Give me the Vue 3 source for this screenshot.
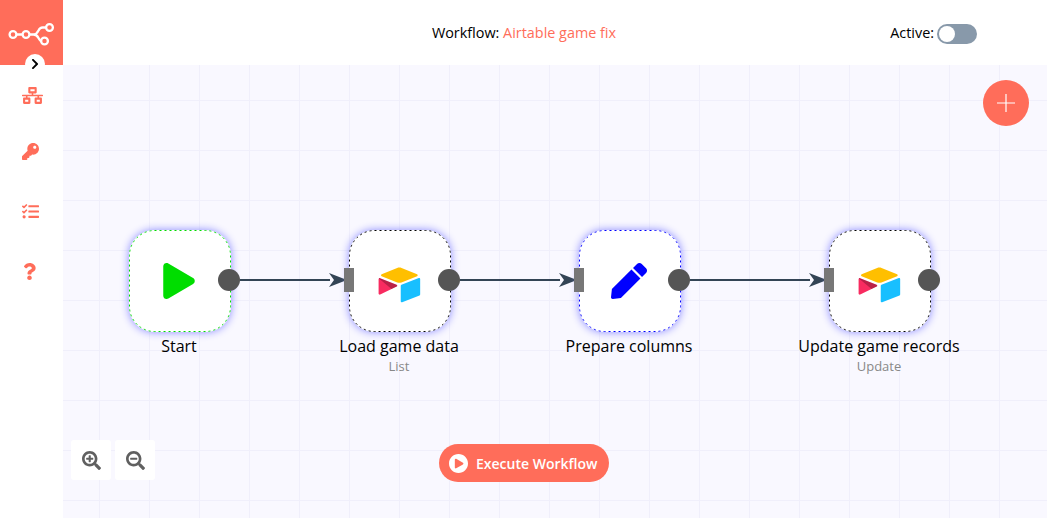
<template>
  <div class="app">
    <header class="topbar">
      <div class="logo-cell">
        <svg class="logo" width="63" height="65" viewBox="0 0 63 65" fill="none" stroke="#fff" stroke-width="2.300">
          <circle cx="13" cy="34.500" r="3.400" />
          <circle cx="26" cy="34.500" r="3.400" />
          <circle cx="49.500" cy="27.500" r="3.400" />
          <circle cx="44.500" cy="41" r="3.400" />
          <path d="M16.500 34.500h6M29.500 34.500h4c3 0 4-2 5-4s2-3 4-3h3.500M33.500 34.500c3 0 4 1.500 5 3.500s1.500 3 3 3" />
        </svg>
      </div>
      <div class="title">Workflow: <span class="title-name">Airtable game fix</span></div>
      <div class="active-cell">
        <span>Active:</span>
        <span class="switch"><span class="knob"></span></span>
      </div>
    </header>

    <div class="body">
      <aside class="sidebar">
        <button class="collapse">
          <svg width="8" height="12" viewBox="0 0 320 512"><path fill="#000" d="M285.476 272.971L91.132 467.314c-9.373 9.373-24.569 9.373-33.941 0l-22.667-22.667c-9.357-9.357-9.375-24.522-.04-33.901L188.505 256 34.484 101.255c-9.335-9.379-9.317-24.544.04-33.901l22.667-22.667c9.373-9.373 24.569-9.373 33.941 0L285.475 239.030c9.373 9.372 9.373 24.568.001 33.941z" /></svg>
        </button>
        <div class="menu-item">
          <svg width="21" height="17" viewBox="0 0 640 512"><path d="M640 264v-16c0-8.840-7.160-16-16-16H344v-40h72c17.670 0 32-14.330 32-32V32c0-17.670-14.330-32-32-32H224c-17.670 0-32 14.330-32 32v128c0 17.670 14.330 32 32 32h72v40H16c-8.840 0-16 7.160-16 16v16c0 8.840 7.160 16 16 16h104v40H64c-17.670 0-32 14.330-32 32v128c0 17.670 14.330 32 32 32h160c17.670 0 32-14.330 32-32V352c0-17.670-14.330-32-32-32h-56v-40h304v40h-56c-17.670 0-32 14.330-32 32v128c0 17.670 14.330 32 32 32h160c17.670 0 32-14.330 32-32V352c0-17.670-14.330-32-32-32h-56v-40h104c8.840 0 16-7.160 16-16zM256 128V64h128v64H256zm-64 320H96v-64h96v64zm352 0h-96v-64h96v64z" /></svg>
        </div>
        <div class="menu-item">
          <svg width="17" height="17" viewBox="0 0 512 512"><path d="M512 176.001C512 273.203 433.202 352 336 352c-11.220 0-22.190-1.062-32.827-3.069l-24.012 27.014A23.999 23.999 0 0 1 261.223 384H224v40c0 13.255-10.745 24-24 24h-40v40c0 13.255-10.745 24-24 24H24c-13.255 0-24-10.745-24-24v-78.059c0-6.365 2.529-12.470 7.029-16.971l161.802-161.802C163.108 213.814 160 195.271 160 176 160 78.798 238.797.001 335.999 0 433.488-.001 512 78.511 512 176.001zM336 128c0 26.510 21.490 48 48 48s48-21.490 48-48-21.490-48-48-48-48 21.490-48 48z" /></svg>
        </div>
        <div class="menu-item">
          <svg width="17" height="17" viewBox="0 0 512 512"><path d="M139.610 35.500a12 12 0 0 0-17 0L58.930 98.810l-22.700-22.120a12 12 0 0 0-17 0L3.530 92.410a12 12 0 0 0 0 17l47.590 47.400a12.780 12.780 0 0 0 17.610 0l15.590-15.620L156.520 69a12.090 12.090 0 0 0 .09-17zm0 159.190a12 12 0 0 0-17 0l-63.680 63.720-22.700-22.100a12 12 0 0 0-17 0L3.530 252a12 12 0 0 0 0 17L51 316.500a12.770 12.770 0 0 0 17.600 0l15.700-15.690 72.200-72.220a12 12 0 0 0 .09-16.900zM64 368c-26.490 0-48.590 21.500-48.590 48S37.530 464 64 464a48 48 0 0 0 0-96zm432 16H208a16 16 0 0 0-16 16v32a16 16 0 0 0 16 16h288a16 16 0 0 0 16-16v-32a16 16 0 0 0-16-16zm0-320H208a16 16 0 0 0-16 16v32a16 16 0 0 0 16 16h288a16 16 0 0 0 16-16V80a16 16 0 0 0-16-16zm0 160H208a16 16 0 0 0-16 16v32a16 16 0 0 0 16 16h288a16 16 0 0 0 16-16v-32a16 16 0 0 0-16-16z" /></svg>
        </div>
        <div class="menu-item help">
          <svg width="13" height="17" viewBox="0 0 384 512"><path d="M202.021 0C122.202 0 70.503 32.703 29.914 91.026c-7.363 10.580-5.093 25.086 5.178 32.874l43.138 32.709c10.373 7.865 25.132 6.026 33.253-4.148 25.049-31.381 43.630-49.449 82.757-49.449 30.764 0 68.816 19.799 68.816 49.631 0 22.552-18.617 34.134-48.993 51.164-35.423 19.860-82.299 44.576-82.299 106.405V320c0 13.255 10.745 24 24 24h72.471c13.255 0 24-10.745 24-24v-5.773c0-42.860 125.268-44.645 125.268-160.627C377.504 66.256 286.902 0 202.021 0zM192 373.459c-38.196 0-69.271 31.075-69.271 69.271 0 38.195 31.075 69.270 69.271 69.270s69.271-31.075 69.271-69.271-31.075-69.270-69.271-69.270z" /></svg>
        </div>
      </aside>

      <main class="canvas">
        <svg class="edges" width="984" height="453">
          <g v-for="edge in edges" :key="edge.from">
            <path :d="`M${edge.from} 215H${edge.to - 14}`" stroke="#334455" stroke-width="2" fill="none" />
            <path :d="`M${edge.to - 15} 208l18 7-18 7 5-7z`" fill="#334455" />
          </g>
        </svg>

        <div v-for="node in nodes" :key="node.name" class="node" :style="{ left: node.x + 'px' }">
          <div class="node-box" :class="node.kind">
            <svg class="node-border" width="102" height="102"><rect x="0.500" y="0.500" width="101" height="101" rx="25" /></svg>
            <svg v-if="node.kind === 'start'" width="32" height="36" viewBox="0 0 448 512"><path fill="#00dd00" d="M424.400 214.700L72.400 6.600C43.800-10.300 0 6.100 0 47.900V464c0 37.500 40.700 60.100 72.400 41.300l352-208c31.400-18.500 31.500-64.100 0-82.600z" /></svg>
            <svg v-else-if="node.kind === 'set'" width="36" height="36" viewBox="0 0 512 512"><path fill="#0000ff" d="M290.740 93.240l128.020 128.020-277.990 277.990-114.140 12.600C11.350 513.540-1.560 500.620.14 485.340l12.700-114.220 277.900-277.880zm207.200-19.060l-60.110-60.110c-18.750-18.750-49.160-18.750-67.910 0l-56.550 56.550 128.020 128.020 56.550-56.550c18.750-18.760 18.750-49.160 0-67.910z" /></svg>
            <svg v-else class="airtable-logo" width="47" height="40" viewBox="0 0 200 170">
              <path fill="#FFBF00" d="M90.039 12.368L24.080 39.661C20.412 41.179 20.450 46.389 24.141 47.852L90.376 74.118C96.196 76.426 102.677 76.426 108.496 74.118L174.732 47.852C178.422 46.389 178.461 41.179 174.792 39.661L108.834 12.368C102.816 9.877 96.056 9.877 90.039 12.368Z" />
              <path fill="#18BFFF" d="M105.312 88.460V154.077C105.312 157.198 108.459 159.335 111.360 158.185L185.167 129.537C186.852 128.869 187.957 127.241 187.957 125.429V59.812C187.957 56.691 184.810 54.554 181.909 55.704L108.102 84.352C106.417 85.020 105.312 86.648 105.312 88.460Z" />
              <path fill="#F82B60" d="M88.078 91.846L66.174 102.422L63.950 103.497L17.712 125.652C14.781 127.066 11.040 124.930 11.040 121.674V60.086C11.040 58.908 11.644 57.891 12.454 57.125C12.792 56.786 13.175 56.511 13.573 56.290C14.678 55.627 16.254 55.450 17.594 55.980L87.710 83.761C91.274 85.175 91.554 90.169 88.078 91.846Z" />
              <path fill="rgba(0,0,0,0.25)" d="M88.078 91.846L66.174 102.422L12.454 57.125C12.792 56.786 13.175 56.511 13.573 56.290C14.678 55.627 16.254 55.450 17.594 55.980L87.710 83.761C91.274 85.175 91.554 90.169 88.078 91.846Z" />
            </svg>
            <span v-if="node.kind !== 'start'" class="port-in"></span>
            <span class="port-out"></span>
          </div>
          <div class="node-name">{{ node.name }}</div>
          <div v-if="node.sub" class="node-sub">{{ node.sub }}</div>
        </div>

        <button class="add-btn" aria-label="Add node">
          <svg width="18" height="18" viewBox="0 0 18 18"><path d="M9 0v18M0 9h18" stroke="#fff" stroke-width="1.200" /></svg>
        </button>

        <div class="zoom-btns">
          <button class="zoom-btn" aria-label="Zoom in">
            <svg width="19" height="19" viewBox="0 0 512 512"><path d="M304 192v32c0 6.600-5.400 12-12 12h-56v56c0 6.600-5.400 12-12 12h-32c-6.600 0-12-5.400-12-12v-56h-56c-6.600 0-12-5.400-12-12v-32c0-6.600 5.400-12 12-12h56v-56c0-6.600 5.400-12 12-12h32c6.600 0 12 5.400 12 12v56h56c6.600 0 12 5.400 12 12zm201 284.700L476.700 505c-9.400 9.400-24.600 9.400-33.900 0L343 405.300c-4.500-4.500-7-10.600-7-17V372c-35.300 27.600-79.700 44-128 44C93.100 416 0 322.900 0 208S93.100 0 208 0s208 93.100 208 208c0 48.300-16.400 92.700-44 128h16.300c6.400 0 12.500 2.500 17 7l99.700 99.700c9.300 9.400 9.300 24.600 0 34zM344 208c0-75.200-60.800-136-136-136S72 132.800 72 208s60.800 136 136 136 136-60.800 136-136z" /></svg>
          </button>
          <button class="zoom-btn" aria-label="Zoom out">
            <svg width="19" height="19" viewBox="0 0 512 512"><path d="M304 192v32c0 6.600-5.400 12-12 12H124c-6.600 0-12-5.400-12-12v-32c0-6.600 5.400-12 12-12h168c6.600 0 12 5.400 12 12zm201 284.700L476.700 505c-9.400 9.400-24.600 9.400-33.900 0L343 405.300c-4.500-4.500-7-10.600-7-17V372c-35.300 27.600-79.700 44-128 44C93.100 416 0 322.900 0 208S93.100 0 208 0s208 93.100 208 208c0 48.300-16.400 92.700-44 128h16.300c6.400 0 12.500 2.500 17 7l99.700 99.700c9.300 9.400 9.300 24.600 0 34zM344 208c0-75.200-60.800-136-136-136S72 132.800 72 208s60.800 136 136 136 136-60.800 136-136z" /></svg>
          </button>
        </div>

        <button class="execute-btn">
          <svg width="19" height="19" viewBox="8 8 496 496"><path fill="#fff" d="M256 8C119 8 8 119 8 256s111 248 248 248 248-111 248-248S393 8 256 8zm115.700 272l-176 101c-15.800 8.800-35.700-2.500-35.700-20V152c0-17.400 19.800-28.800 35.700-20l176 107c16.400 9.200 16.400 32.900 0 41z" /></svg>
          <span>Execute Workflow</span>
        </button>
      </main>
    </div>
  </div>
</template>

<script setup>
const nodes = [
  { name: 'Start', kind: 'start', x: 66 },
  { name: 'Load game data', sub: 'List', kind: 'airtable', x: 286 },
  { name: 'Prepare columns', kind: 'set', x: 516 },
  { name: 'Update game records', sub: 'Update', kind: 'airtable', x: 766 },
]

// connection start and input port, relative to the canvas
const edges = [
  { from: 177, to: 281 },
  { from: 397, to: 511 },
  { from: 627, to: 761 },
]
</script>

<style>
html,
body {
  margin: 0;
  overflow: hidden;
}
</style>

<style scoped>
.app {
  width: 1047px;
  height: 518px;
  display: flex;
  flex-direction: column;
  font-family: 'Open Sans', sans-serif;
  color: #000;
  background: #fff;
}

.topbar {
  height: 65px;
  flex: none;
  display: grid;
  grid-template-columns: 1fr auto 1fr;
  align-items: center;
  font-size: 14.400px;
}

.logo-cell {
  width: 63px;
  height: 65px;
  background: #ff6d5a;
}

.logo {
  display: block;
}

.title {
  padding-left: 1px;
}

.title-name {
  color: #ff6d5a;
}

.active-cell {
  justify-self: end;
  display: flex;
  align-items: center;
  gap: 3px;
  padding-right: 70px;
}

.switch {
  position: relative;
  width: 40px;
  height: 20px;
  margin-top: 2px;
  border-radius: 10px;
  background: #8899aa;
}

.knob {
  position: absolute;
  top: 2px;
  left: 2px;
  width: 16px;
  height: 16px;
  border-radius: 50%;
  background: #fff;
}

.body {
  flex: 1;
  display: flex;
  min-height: 0;
}

.sidebar {
  position: relative;
  width: 63px;
  flex: none;
  box-sizing: border-box;
  padding: 22px 0 0 22px;
  background: #fff;
}

.collapse {
  position: absolute;
  top: -11px;
  left: 25px;
  width: 20px;
  height: 20px;
  padding: 0;
  border: none;
  border-radius: 50%;
  background: #fff;
  display: flex;
  align-items: center;
  justify-content: center;
}

.menu-item {
  height: 60px;
  fill: #ff6d5a;
}

.menu-item:first-of-type {
  height: 56px;
}

.menu-item svg {
  display: block;
}

.menu-item.help {
  padding-left: 1px;
}

.canvas {
  position: relative;
  flex: 1;
  overflow: hidden;
  background-color: #f9f8ff;
  background-image:
    linear-gradient(to right, #f0effb 1px, transparent 1px),
    linear-gradient(to bottom, #f0effb 1px, transparent 1px);
  background-size: 50px 50px;
  background-position: 36px 35px;
}

.edges {
  position: absolute;
  top: 0;
  left: 0;
}

.node {
  position: absolute;
  top: 165px;
  width: 102px;
  text-align: center;
}

.node-box {
  position: relative;
  box-sizing: border-box;
  width: 102px;
  height: 102px;
  padding: 0 2px 1px 0;
  display: flex;
  align-items: center;
  justify-content: center;
  background: #fff;
  border-radius: 25px;
  box-shadow: 0 0 8px #8888ff;
}

.node-border {
  position: absolute;
  top: 0;
  left: 0;
  fill: none;
  stroke: #000;
  stroke-dasharray: 2 3;
}

.start .node-border {
  stroke: #00dd00;
}

.set .node-border {
  stroke: #0000ff;
}

.airtable-logo {
  margin-top: 8px;
}

.port-in {
  position: absolute;
  left: -5px;
  top: 38px;
  width: 10px;
  height: 24px;
  background: #777;
}

.port-out {
  position: absolute;
  right: -9px;
  top: 39px;
  width: 22px;
  height: 22px;
  border-radius: 50%;
  background: #555;
}

.node-name {
  margin: 3px -59px 0 -61px;
  font-size: 16px;
  line-height: 22px;
  white-space: nowrap;
}

.node-sub {
  font-size: 13px;
  line-height: 18px;
  padding-right: 2px;
  color: #888;
}

.add-btn {
  position: absolute;
  top: 15px;
  right: 18px;
  width: 46px;
  height: 46px;
  padding: 0;
  border: none;
  border-radius: 50%;
  background: #ff6d5a;
  display: flex;
  align-items: center;
  justify-content: center;
}

.zoom-btns {
  position: absolute;
  left: 8px;
  bottom: 38px;
  display: flex;
  gap: 4px;
}

.zoom-btn {
  width: 40px;
  height: 40px;
  padding: 0;
  border: none;
  border-radius: 3px;
  background: #fff;
  fill: #606060;
  display: flex;
  align-items: center;
  justify-content: center;
}

.execute-btn {
  position: absolute;
  left: 376px;
  bottom: 36px;
  width: 170px;
  height: 38px;
  box-sizing: border-box;
  padding: 0 0 0 10px;
  border: none;
  border-radius: 19px;
  background: #ff6d5a;
  color: #fff;
  font-family: inherit;
  font-size: 14px;
  font-weight: 600;
  display: flex;
  align-items: center;
  gap: 8px;
}
</style>
